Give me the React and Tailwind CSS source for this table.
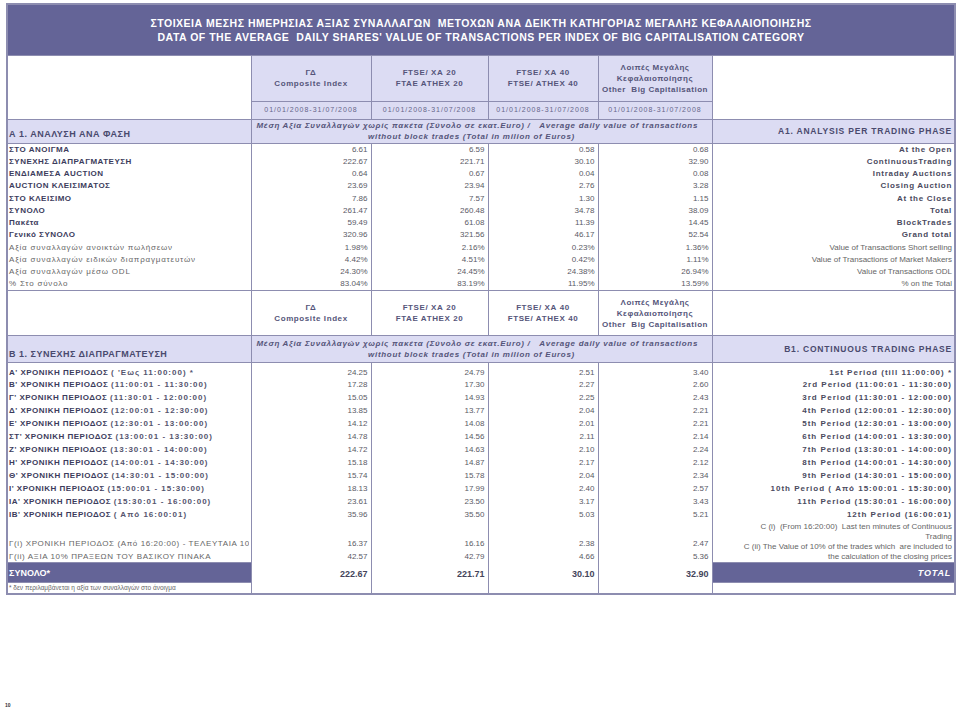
import React from 'react';

const BORDER = 'border-[#8d8db0]';

const SECTION_A = [
  ['ΣΤΟ ΑΝΟΙΓΜΑ', '6.61', '6.59', '0.58', '0.68', 'At the Open', true],
  ['ΣΥΝΕΧΗΣ ΔΙΑΠΡΑΓΜΑΤΕΥΣΗ', '222.67', '221.71', '30.10', '32.90', 'ContinuousTrading', true],
  ['ΕΝΔΙΑΜΕΣΑ AUCTION', '0.64', '0.67', '0.04', '0.08', 'Intraday Auctions', true],
  ['AUCTION ΚΛΕΙΣΙΜΑΤΟΣ', '23.69', '23.94', '2.76', '3.28', 'Closing Auction', true],
  ['ΣΤΟ ΚΛΕΙΣΙΜΟ', '7.86', '7.57', '1.30', '1.15', 'At the Close', true],
  ['ΣΥΝΟΛΟ', '261.47', '260.48', '34.78', '38.09', 'Total', true],
  ['Πακέτα', '59.49', '61.08', '11.39', '14.45', 'BlockTrades', true],
  ['Γενικό ΣΥΝΟΛΟ', '320.96', '321.56', '46.17', '52.54', 'Grand total', true],
  ['Αξία συναλλαγών ανοικτών πωλήσεων', '1.98%', '2.16%', '0.23%', '1.36%', 'Value of Transactions Short selling', false],
  ['Αξία συναλλαγών ειδικών διαπραγματευτών', '4.42%', '4.51%', '0.42%', '1.11%', 'Value of Transactions of Market Makers', false],
  ['Αξία συναλλαγών μέσω ODL', '24.30%', '24.45%', '24.38%', '26.94%', 'Value of Transactions ODL', false],
  ['% Στο σύνολο', '83.04%', '83.19%', '11.95%', '13.59%', '% on the Total', false],
];

const SECTION_B = [
  ["Α' ΧΡΟΝΙΚΗ ΠΕΡΙΟΔΟΣ", "( 'Εως 11:00:00) *", '24.25', '24.79', '2.51', '3.40', '1st Period   (till 11:00:00) *'],
  ["Β' ΧΡΟΝΙΚΗ ΠΕΡΙΟΔΟΣ", '(11:00:01 - 11:30:00)', '17.28', '17.30', '2.27', '2.60', '2rd Period (11:00:01 - 11:30:00)'],
  ["Γ' ΧΡΟΝΙΚΗ ΠΕΡΙΟΔΟΣ", '(11:30:01 - 12:00:00)', '15.05', '14.93', '2.25', '2.43', '3rd Period (11:30:01 - 12:00:00)'],
  ["Δ' ΧΡΟΝΙΚΗ ΠΕΡΙΟΔΟΣ", '(12:00:01 - 12:30:00)', '13.85', '13.77', '2.04', '2.21', '4th Period (12:00:01 - 12:30:00)'],
  ["Ε' ΧΡΟΝΙΚΗ ΠΕΡΙΟΔΟΣ", '(12:30:01 - 13:00:00)', '14.12', '14.08', '2.01', '2.21', '5th Period (12:30:01 - 13:00:00)'],
  ["ΣΤ' ΧΡΟΝΙΚΗ ΠΕΡΙΟΔΟΣ", '(13:00:01 - 13:30:00)', '14.78', '14.56', '2.11', '2.14', '6th Period (14:00:01 - 13:30:00)'],
  ["Ζ' ΧΡΟΝΙΚΗ ΠΕΡΙΟΔΟΣ", '(13:30:01 - 14:00:00)', '14.72', '14.63', '2.10', '2.24', '7th Period (13:30:01 - 14:00:00)'],
  ["Η' ΧΡΟΝΙΚΗ ΠΕΡΙΟΔΟΣ", '(14:00:01 - 14:30:00)', '15.18', '14.87', '2.17', '2.12', '8th Period (14:00:01 - 14:30:00)'],
  ["Θ' ΧΡΟΝΙΚΗ ΠΕΡΙΟΔΟΣ", '(14:30:01 - 15:00:00)', '15.74', '15.78', '2.04', '2.34', '9th Period (14:30:01 - 15:00:00)'],
  ["Ι' ΧΡΟΝΙΚΗ ΠΕΡΙΟΔΟΣ", '(15:00:01 - 15:30:00)', '18.13', '17.99', '2.40', '2.57', '10th Period ( Από 15:00:01 - 15:30:00)'],
  ["ΙΑ' ΧΡΟΝΙΚΗ ΠΕΡΙΟΔΟΣ", '(15:30:01 - 16:00:00)', '23.61', '23.50', '3.17', '3.43', '11th Period (15:30:01 - 16:00:00)'],
  ["ΙΒ' ΧΡΟΝΙΚΗ ΠΕΡΙΟΔΟΣ", '( Από 16:00:01)', '35.96', '35.50', '5.03', '5.21', '12th Period (16:00:01)'],
];

const INDICES = [
  ['ΓΔ', 'Composite Index'],
  ['FTSE/ ΧΑ 20', 'FTAE ATHEX 20'],
  ['FTSE/ ΧΑ 40', 'FTSE/ ATHEX 40'],
];

function IndexHeaders({ bg }) {
  return (
    <>
      {INDICES.map(([a, b]) => (
        <td key={a} className={`border ${BORDER} ${bg} text-center align-middle text-[8px] font-bold tracking-[0.6px] leading-[11px] text-[#55557a]`}>
          <div>{a}</div>
          <div>{b}</div>
        </td>
      ))}
      <td className={`border ${BORDER} ${bg} text-center align-middle text-[8px] font-bold tracking-[0.5px] leading-[11px] text-[#55557a]`}>
        <div>Λοιπές Μεγάλης</div>
        <div>Κεφαλαιοποίησης</div>
        <div>Other&nbsp; Big Capitalisation</div>
      </td>
    </>
  );
}

function AverageCaption() {
  return (
    <td colSpan={4} className={`border ${BORDER} bg-[#dcdcf3] align-middle text-[8px] font-bold italic tracking-[0.7px] leading-[11px] text-[#55557a]`}>
      <div className="pl-[5px] whitespace-nowrap">Μέση Αξία Συναλλαγών χωρίς πακέτα (Σύνολο σε εκατ.Euro) /&nbsp;&nbsp; Average daily value of transactions</div>
      <div className="text-center pr-[20px] whitespace-nowrap">without block trades (Total in milion of Euros)</div>
    </td>
  );
}

function Num({ v }) {
  return (
    <td className={`border-x ${BORDER} text-right pr-[3px] text-[8px] text-[#5a5a66]`}>
      {v}
    </td>
  );
}

export default function App() {
  return (
    <div className="bg-white min-h-[709px] font-['Liberation_Sans',Arial,sans-serif] text-[#555]">
      <div className="pl-[6px] pt-[3px] pr-[6px]">
        <table className={`table-fixed border-collapse w-[948px] border-2 ${BORDER}`}>
          <colgroup>
            <col className="w-[244px]" />
            <col className="w-[120px]" />
            <col className="w-[117px]" />
            <col className="w-[110px]" />
            <col className="w-[114px]" />
            <col className="w-[243px]" />
          </colgroup>
          <tbody>
            {/* τίτλος */}
            <tr className="h-[51px]">
              <td colSpan={6} className={`border ${BORDER} bg-[#646497] text-center text-white font-bold text-[10.5px] leading-[14px] tracking-[0.5px]`}>
                <div>ΣΤΟΙΧΕΙΑ ΜΕΣΗΣ ΗΜΕΡΗΣΙΑΣ ΑΞΙΑΣ ΣΥΝΑΛΛΑΓΩΝ&nbsp; ΜΕΤΟΧΩΝ ΑΝΑ ΔΕΙΚΤΗ ΚΑΤΗΓΟΡΙΑΣ ΜΕΓΑΛΗΣ ΚΕΦΑΛΑΙΟΠΟΙΗΣΗΣ</div>
                <div>DATA OF THE AVERAGE&nbsp; DAILY SHARES' VALUE OF TRANSACTIONS PER INDEX OF BIG CAPITALISATION CATEGORY</div>
              </td>
            </tr>

            {/* Α: κεφαλίδες δεικτών */}
            <tr className="h-[46px]">
              <td rowSpan={2} className={`border ${BORDER} bg-white`} />
              <IndexHeaders bg="bg-[#dcdcf3]" />
              <td rowSpan={2} className={`border ${BORDER} bg-white`} />
            </tr>
            <tr className="h-[18px]">
              {[0, 1, 2, 3].map((i) => (
                <td key={i} className={`border ${BORDER} bg-[#dcdcf3] text-center text-[7px] tracking-[1px] text-[#66668a]`}>
                  01/01/2008-31/07/2008
                </td>
              ))}
            </tr>
            <tr className="h-[24px]">
              <td className={`border ${BORDER} bg-[#dcdcf3] align-bottom pl-[1px] pb-[1px] text-[9px] font-bold tracking-[0.5px] text-[#4a4a6e]`}>
                Α 1. ΑΝΑΛΥΣΗ ΑΝΑ ΦΑΣΗ
              </td>
              <AverageCaption />
              <td className={`border ${BORDER} bg-[#dcdcf3] text-right pr-[2px] text-[8.5px] font-bold tracking-[0.8px] text-[#4a4a6e]`}>
                A1. ANALYSIS PER TRADING PHASE
              </td>
            </tr>
            {SECTION_A.map(([label, a, b, c, d, en, bold], i) => (
              <tr key={label} className={`h-[12.3px] leading-[12px] ${i === SECTION_A.length - 1 ? `border-b ${BORDER}` : ''}`}>
                <td className={`border-x ${BORDER} pl-[1px] whitespace-nowrap overflow-hidden ${bold ? 'text-[8px] font-bold tracking-[0.5px] text-[#3c3c5c]' : 'text-[8px] tracking-[0.8px] text-[#666]'}`}>
                  {label}
                </td>
                <Num v={a} />
                <Num v={b} />
                <Num v={c} />
                <Num v={d} />
                <td className={`border-x ${BORDER} text-right pr-[2px] whitespace-nowrap ${bold ? 'text-[8px] font-bold tracking-[0.7px] text-[#4a4a5e]' : 'text-[8px] text-[#666]'}`}>
                  {en}
                </td>
              </tr>
            ))}

            {/* Β: κεφαλίδες δεικτών */}
            <tr className="h-[45px]">
              <td className={`border ${BORDER} bg-white`} />
              <IndexHeaders bg="bg-white" />
              <td className={`border ${BORDER} bg-white`} />
            </tr>
            <tr className="h-[27px]">
              <td className={`border ${BORDER} bg-[#dcdcf3] align-bottom pl-[1px] pb-[1px] text-[9px] font-bold tracking-[0.5px] text-[#4a4a6e]`}>
                Β 1. ΣΥΝΕΧΗΣ ΔΙΑΠΡΑΓΜΑΤΕΥΣΗ
              </td>
              <AverageCaption />
              <td className={`border ${BORDER} bg-[#dcdcf3] text-right pr-[2px] text-[8.5px] font-bold tracking-[0.8px] text-[#4a4a6e]`}>
                B1. CONTINUOUS TRADING PHASE
              </td>
            </tr>
            {SECTION_B.map(([label, time, a, b, c, d, en], i) => (
              <tr key={label} className={`${i === 0 ? 'h-[16px] align-bottom' : 'h-[13px]'} leading-[12px]`}>
                <td className={`border-x ${BORDER} pl-[1px] whitespace-nowrap overflow-hidden text-[8px] font-bold tracking-[0.5px] text-[#3c3c5c]`}>
                  {label} <span className="tracking-[1px] text-[#55556e]">{time}</span>
                </td>
                <Num v={a} />
                <Num v={b} />
                <Num v={c} />
                <Num v={d} />
                <td className={`border-x ${BORDER} text-right pr-[2px] whitespace-nowrap text-[8px] font-bold tracking-[1px] text-[#4a4a5e]`}>
                  {en}
                </td>
              </tr>
            ))}
            <tr className="h-[28px]">
              <td className={`border-x ${BORDER} align-bottom pb-[1px] pl-[1px] text-[8px] tracking-[0.6px] text-[#666]`}>
                <div className="w-[240px] whitespace-nowrap overflow-hidden">Γ(i) ΧΡΟΝΙΚΗ ΠΕΡΙΟΔΟΣ (Από 16:20:00) - ΤΕΛΕΥΤΑΙΑ 10 ΛΕ</div>
              </td>
              {['16.37', '16.16', '2.38', '2.47'].map((v, i) => (
                <td key={i} className={`border-x ${BORDER} align-bottom pb-[1px] text-right pr-[3px] text-[8px] text-[#5a5a66]`}>{v}</td>
              ))}
              <td rowSpan={2} className={`border-x ${BORDER} align-top text-right pr-[2px] text-[8px] leading-[10px] text-[#666]`}>
                <div>C (i)&nbsp; (From 16:20:00)&nbsp; Last ten minutes of Continuous</div>
                <div>Trading</div>
                <div>C (ii) The Value of 10% of the trades which&nbsp; are included to</div>
                <div>the calculation of the closing prices</div>
              </td>
            </tr>
            <tr className="h-[10px] leading-[10px]">
              <td className={`border-x ${BORDER} pl-[1px] text-[8px] tracking-[0.6px] text-[#666] whitespace-nowrap overflow-hidden`}>
                Γ(ii) ΑΞΙΑ 10% ΠΡΑΞΕΩΝ ΤΟΥ ΒΑΣΙΚΟΥ ΠΙΝΑΚΑ
              </td>
              {['42.57', '42.79', '4.66', '5.36'].map((v, i) => (
                <td key={i} className={`border-x ${BORDER} text-right pr-[3px] text-[8px] text-[#5a5a66]`}>{v}</td>
              ))}
            </tr>
            <tr className="h-[20px]">
              <td className={`border ${BORDER} bg-[#646497] align-bottom pl-[1px] pb-[1px] text-[9px] font-bold text-white`}>
                ΣΥΝΟΛΟ*
              </td>
              {['222.67', '221.71', '30.10', '32.90'].map((v, i) => (
                <td key={i} className={`border-x ${BORDER} align-bottom pb-[1px] text-right pr-[3px] text-[9px] font-bold text-[#44445a]`}>{v}</td>
              ))}
              <td className={`border ${BORDER} bg-[#646497] align-bottom pb-[1px] text-right pr-[3px] text-[9px] font-bold italic tracking-[0.8px] text-white`}>
                TOTAL
              </td>
            </tr>
            <tr className="h-[11px] leading-[10px]">
              <td className={`border ${BORDER} pl-[1px] text-[6.5px] text-[#666] whitespace-nowrap overflow-hidden`}>
                * δεν περιλαμβάνεται η αξία των συναλλαγών στο άνοιγμα
              </td>
              <td className={`border-x ${BORDER}`} />
              <td className={`border-x ${BORDER}`} />
              <td className={`border-x ${BORDER}`} />
              <td className={`border-x ${BORDER}`} />
              <td className={`border ${BORDER}`} />
            </tr>
          </tbody>
        </table>
      </div>
      <div className="pt-[107px] pl-[5px] text-[5px] font-bold text-[#333]">10</div>
    </div>
  );
}
